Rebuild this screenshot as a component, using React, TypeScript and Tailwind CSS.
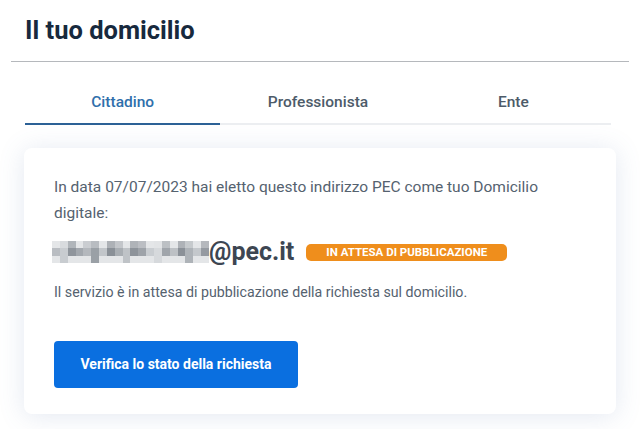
const tabs = [
  { label: "Cittadino", active: true },
  { label: "Professionista", active: false },
  { label: "Ente", active: false },
];

// pixelated blur standing in for the hidden part of the address
const blurCols = [
  "bg-[#b9bdc2]", "bg-[#c8ccd0]", "bg-[#8f959c]", "bg-[#a3a8ae]", "bg-[#b4b8bd]",
  "bg-[#9aa0a6]", "bg-[#c2c6ca]", "bg-[#8a9097]", "bg-[#a9aeb3]", "bg-[#bfc3c7]",
  "bg-[#8d939a]", "bg-[#9ea3a9]", "bg-[#c9cdd1]", "bg-[#d6d9dc]", "bg-[#a0a5ab]",
  "bg-[#bdc1c5]", "bg-[#8b9198]", "bg-[#aeb3b8]", "bg-[#c4c8cc]", "bg-[#959aa1]",
];

function BlurredName() {
  return (
    <div className="flex h-[22px] w-[157px] items-stretch">
      {blurCols.map((c, i) => (
        <div key={i} className="flex flex-1 flex-col">
          <div className={`flex-1 ${i % 3 === 0 ? "bg-[#d8dbde]" : c} opacity-70`} />
          <div className={`flex-1 ${c}`} />
          <div className={`flex-1 ${i % 4 === 1 ? c : "bg-[#e4e6e8]"}`} />
        </div>
      ))}
    </div>
  );
}

export default function App() {
  return (
    <div
      className="h-[429px] w-[640px] overflow-hidden bg-white"
      style={{ fontFamily: "Roboto, 'Noto Sans', sans-serif" }}
    >
      <div className="px-[25px] pt-[15px] pb-[16px]">
        <h1 className="text-[25.5px] font-bold leading-[30px] text-[#17293d]">
          Il tuo domicilio
        </h1>
      </div>
      <div className="mx-[11px] h-px bg-[#b5b8bc]" />

      <div className="mx-[25px] mt-[28px] grid grid-cols-3 pr-[4px]">
        {tabs.map((t) => (
          <div
            key={t.label}
            className={`pb-[9px] text-center text-[15.5px] font-medium leading-[24px] ${
              t.active
                ? "border-b-[2px] border-[#2c6196] text-[#2f6fab]"
                : "border-b-[2px] border-[#eceef1] text-[#4d5b69]"
            }`}
          >
            {t.label}
          </div>
        ))}
      </div>

      <div className="mx-[24px] mt-[23px] rounded-[8px] bg-white px-[30px] pt-[26px] pb-[26px] shadow-[0_2px_26px_rgba(90,120,170,0.17)]">
        <p className="text-[15.5px] leading-[26px] text-[#55626f]">
          In data 07/07/2023 hai eletto questo indirizzo PEC come tuo Domicilio
          <br />
          digitale:
        </p>
        <div className="mt-[12px] flex h-[28px] items-center">
          <div className="-ml-[2px]">
            <BlurredName />
          </div>
          <span className="text-[25px] font-bold leading-[28px] text-[#3d4652]">
            @pec.it
          </span>
          <span className="ml-[12px] rounded-[5px] bg-[#ef8e1c] px-[20px] text-[11.5px] font-bold uppercase leading-[17px] text-white">
            In attesa di pubblicazione
          </span>
        </div>
        <p className="mt-[15px] text-[14.2px] leading-[22px] text-[#55626f]">
          Il servizio è in attesa di pubblicazione della richiesta sul
          domicilio.
        </p>
        <button className="mt-[38px] h-[47px] w-[244px] rounded-[4px] bg-[#0a6fe0] text-[14px] font-bold text-white">
          Verifica lo stato della richiesta
        </button>
      </div>
    </div>
  );
}
